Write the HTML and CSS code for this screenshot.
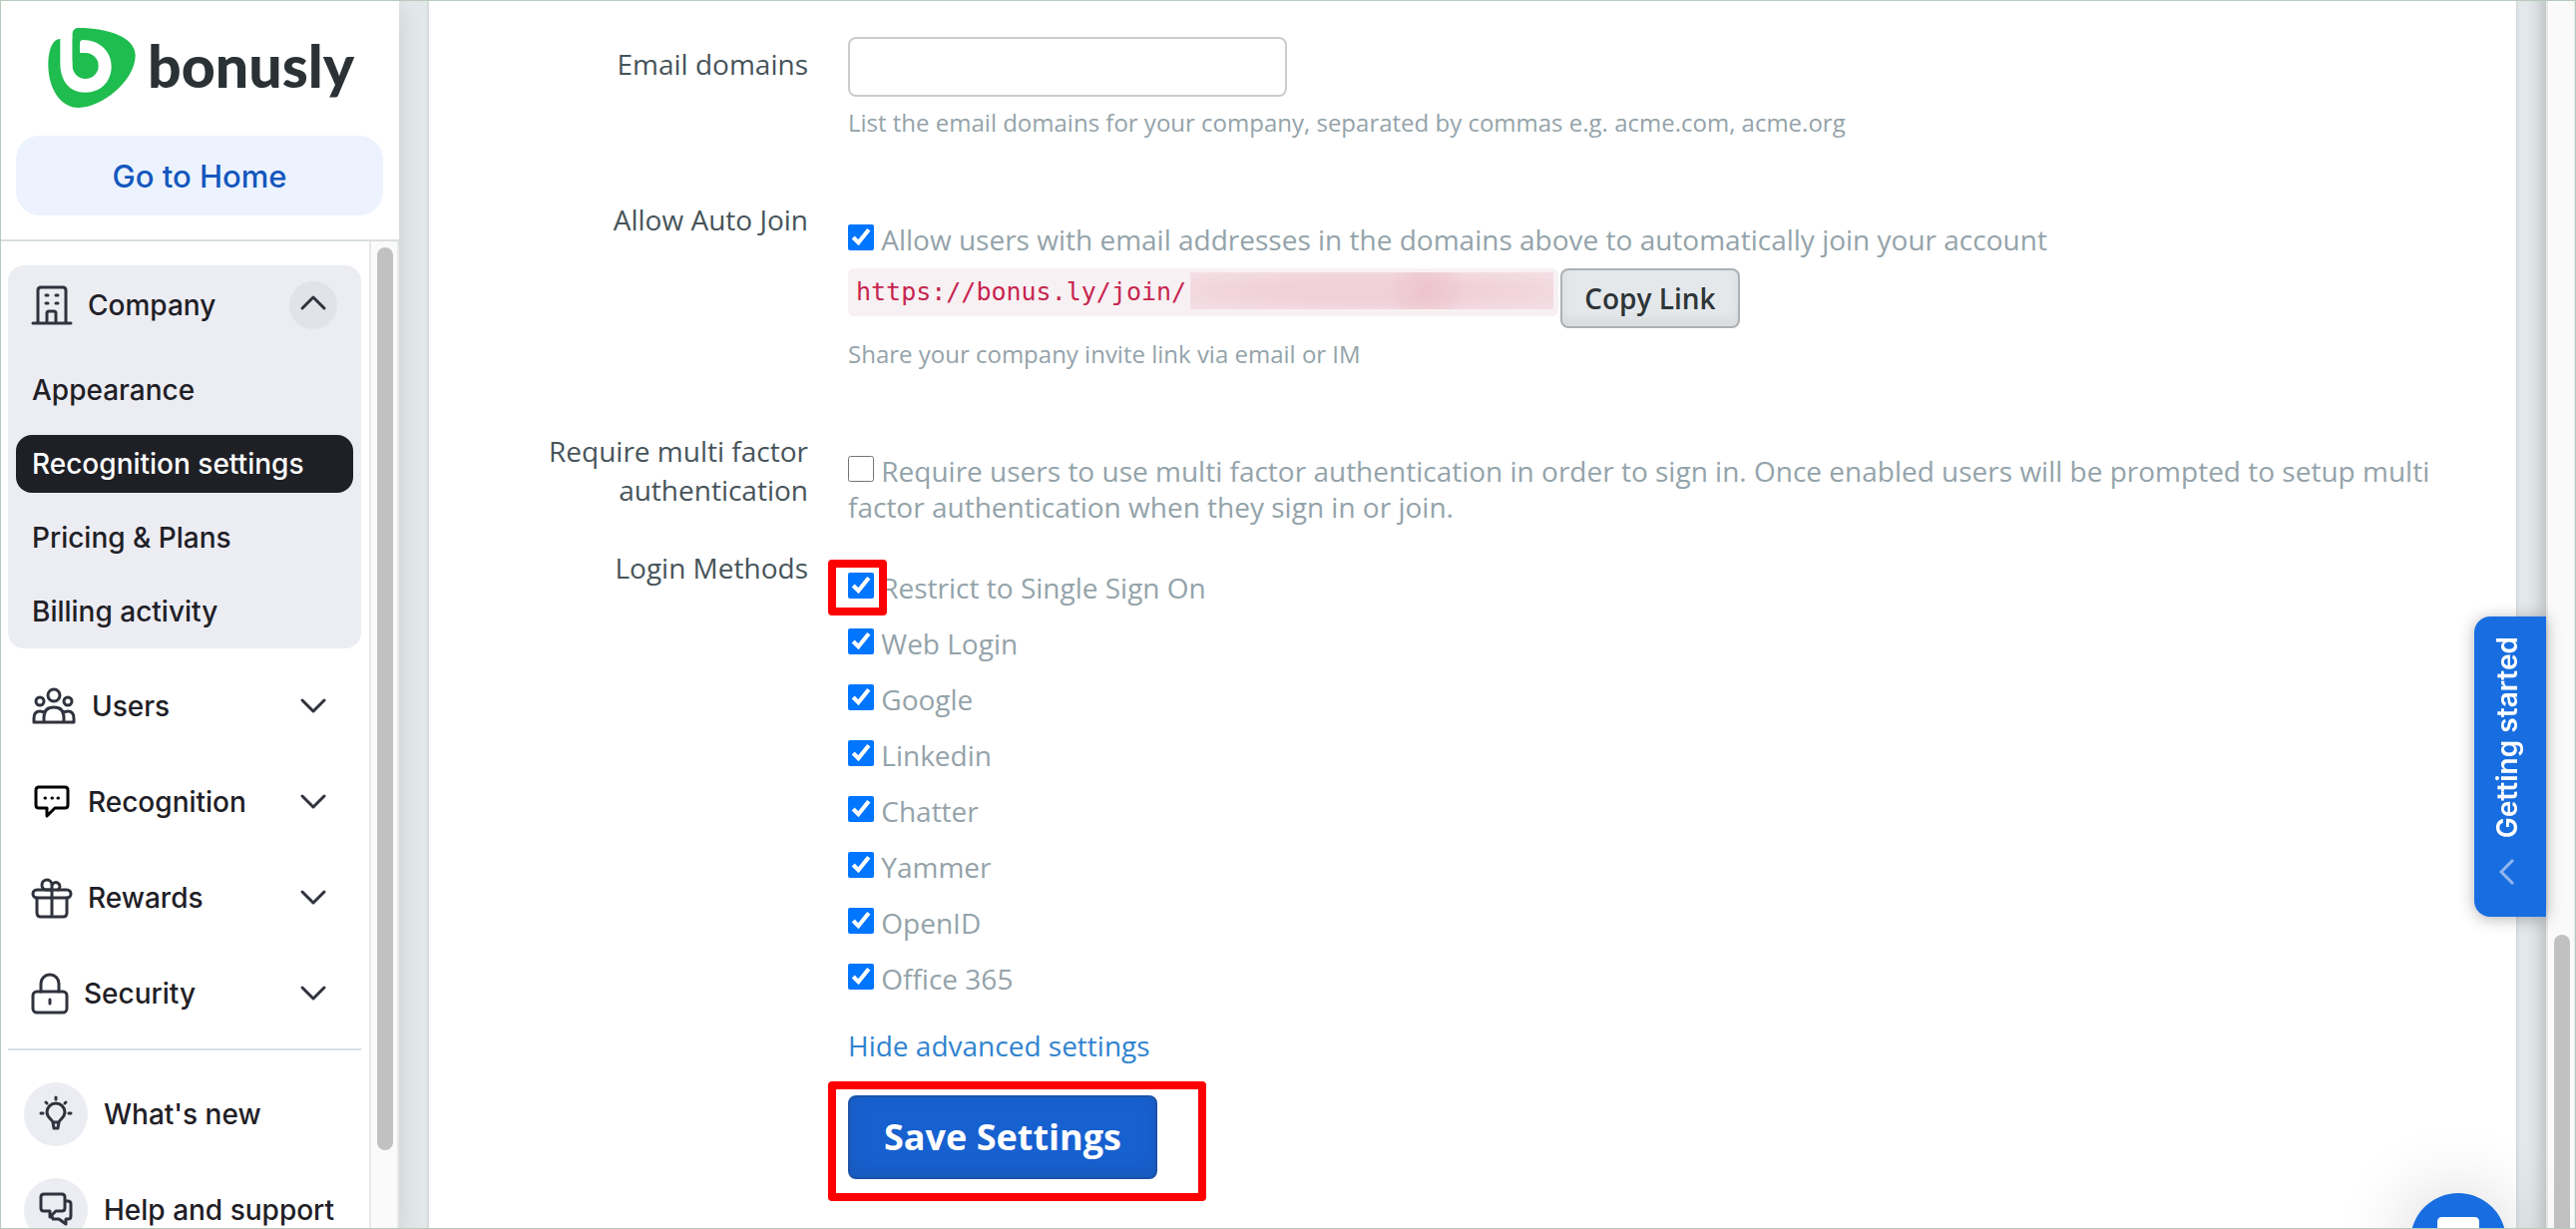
FILE: index.html
```html
<!DOCTYPE html>
<html lang="en">
  <head>
    <meta charset="UTF-8" />
    <title>Bonusly - Recognition settings</title>
    <link rel="stylesheet" href="styles.css">
  </head>
  <body>
    <aside class="sidebar">
      <div class="sidebar-head">
        <a class="logo" href="#">
          <svg width="88" height="80" viewBox="0 0 262 240">
            <path fill="#1fbc4f" d="M36 33C12 33 0 68 0 110C0 180 36 240 92 240C160 240 262 160 262 82C262 28 180 0 92 0C80 0 73 8 73 20L73 33Z" />
            <path fill="#fff" d="M36 0V104C36 160 64 194 112 194C158 194 190 160 190 116C190 70 154 36 104 36Q95 36 95 45V75H112A39 39 0 1 1 73 114V0Z" />
            <path fill="#1fbc4f" d="M73 40V20Q73 0 93 0H100V36Q95 38 95 45V75L73 100Z" />
          </svg>
          <span>bonusly</span>
        </a>
        <button class="home">Go to Home</button>
      </div>
      <div class="sidebar-body">
        <nav class="menu">
          <div class="group">
            <button class="section">
              <svg width="40" height="40" viewBox="0 0 40 40">
                <path d="M6 38V5Q6 2 9 2H31Q34 2 34 5V38M1 38H39M15 38V28Q15 26 17 26H22Q24 26 24 28V38M14 10H16M24 10H26M14 18H16M24 18H26" />
              </svg>
              <span>Company</span>
              <span class="arrow up"><svg width="24" height="14" viewBox="0 0 24 14"><path d="M1 13L12 2L23 13" /></svg></span>
            </button>
            <a class="item" href="#">Appearance</a>
            <a class="item active" href="#">Recognition settings</a>
            <a class="item" href="#">Pricing &amp; Plans</a>
            <a class="item" href="#">Billing activity</a>
          </div>
          <button class="section">
            <svg width="44" height="40" viewBox="0 0 44 40">
              <circle cx="22" cy="9" r="6" /><circle cx="8" cy="15" r="4" /><circle cx="36" cy="15" r="4" />
              <path d="M2 36V32Q2 25 8 25Q11 25 13 27M42 36V32Q42 25 36 25Q33 25 31 27M12 36V31Q12 21 22 21Q32 21 32 31V36M2 36H42" />
            </svg>
            <span>Users</span>
            <span class="arrow"><svg width="24" height="14" viewBox="0 0 24 14"><path d="M1 1L12 12L23 1" /></svg></span>
          </button>
          <button class="section">
            <svg class="solid" width="40" height="40" viewBox="0 0 40 40">
              <path d="M7 5H33Q36 5 36 8V23Q36 26 33 26H23L15 34V26H7Q4 26 4 23V8Q4 5 7 5ZM13 16H13.500M20 16H20.500M26 16H26.500" />
            </svg>
            <span>Recognition</span>
            <span class="arrow"><svg width="24" height="14" viewBox="0 0 24 14"><path d="M1 1L12 12L23 1" /></svg></span>
          </button>
          <button class="section">
            <svg width="40" height="40" viewBox="0 0 40 40">
              <rect x="1" y="12" width="38" height="8" rx="4" />
              <path d="M5 20V35Q5 39 9 39H31Q35 39 35 35V20M20 12V39M20 12H14A5 5 0 1 1 20 7ZM20 12V8A4 4 0 1 1 26 12" />
            </svg>
            <span>Rewards</span>
            <span class="arrow"><svg width="24" height="14" viewBox="0 0 24 14"><path d="M1 1L12 12L23 1" /></svg></span>
          </button>
          <button class="section">
            <svg width="36" height="40" viewBox="0 0 36 40">
              <rect x="1" y="18" width="34" height="21" rx="4" />
              <path d="M9 18V10A9 9 0 0 1 27 10V18M18 26V30" />
            </svg>
            <span>Security</span>
            <span class="arrow"><svg width="24" height="14" viewBox="0 0 24 14"><path d="M1 1L12 12L23 1" /></svg></span>
          </button>
          <div class="extras">
            <a class="extra" href="#">
              <span class="bubble">
                <svg width="34" height="36" viewBox="0 0 34 36">
                  <path d="M14 26C13 23 8 21 8 16A9 9 0 0 1 26 16C26 21 21 23 20 26ZM14 26L15 32H19L20 26M17 1V3M7 6L8 7M27 6L26 7M2 17H4M30 17H32" />
                </svg>
              </span>
              What's new
            </a>
            <a class="extra" href="#">
              <span class="bubble">
                <svg width="34" height="36" viewBox="0 0 34 36">
                  <path d="M5 2H23Q26 2 26 5V16Q26 19 23 19H17L11 25V19H5Q2 19 2 16V5Q2 2 5 2ZM27 9H29Q32 9 32 12V24Q32 27 29 27H27V32L20 27H14L13 24" />
                </svg>
              </span>
              Help and support
            </a>
          </div>
        </nav>
        <div class="track"><div class="thumb"></div></div>
      </div>
    </aside>

    <main class="page">
      <form class="panel" onsubmit="return false">
        <div class="row">
          <label class="name" for="domains">Email domains</label>
          <div>
            <input class="text" type="text" id="domains" />
            <p class="help">List the email domains for your company, separated by commas e.g. acme.com, acme.org</p>
          </div>
        </div>
        <div class="row">
          <span class="name">Allow Auto Join</span>
          <div class="checks">
            <label class="check"><input type="checkbox" checked /> Allow users with email addresses in the domains above to automatically join your account</label>
            <div class="invite">
              <code>https://bonus.ly/join/<span class="hidden-key"></span></code>
              <button type="button" class="copy">Copy Link</button>
            </div>
            <p class="help">Share your company invite link via email or IM</p>
          </div>
        </div>
        <div class="row">
          <span class="name">Require multi factor authentication</span>
          <div class="checks">
            <label class="check"><input type="checkbox" /> Require users to use multi factor authentication in order to sign in. Once enabled users will be prompted to setup multi factor authentication when they sign in or join.</label>
          </div>
        </div>
        <div class="row">
          <span class="name">Login Methods</span>
          <div class="checks">
            <label class="check marked"><input type="checkbox" checked /> Restrict to Single Sign On</label>
            <label class="check"><input type="checkbox" checked /> Web Login</label>
            <label class="check"><input type="checkbox" checked /> Google</label>
            <label class="check"><input type="checkbox" checked /> Linkedin</label>
            <label class="check"><input type="checkbox" checked /> Chatter</label>
            <label class="check"><input type="checkbox" checked /> Yammer</label>
            <label class="check"><input type="checkbox" checked /> OpenID</label>
            <label class="check"><input type="checkbox" checked /> Office 365</label>
            <a class="advanced" href="#">Hide advanced settings</a>
            <div class="save-box"><button class="save">Save Settings</button></div>
          </div>
        </div>
      </form>
      <button class="started">
        <span>Getting started</span>
        <svg width="16" height="28" viewBox="0 0 16 28"><path d="M14 2L2 14L14 26" /></svg>
      </button>
      <button class="chat" aria-label="Chat">
        <svg width="42" height="48" viewBox="0 0 42 48"><path d="M5 0H37Q42 0 42 5V48L34 42H5Q0 42 0 37V5Q0 0 5 0Z" /></svg>
      </button>
    </main>
    <div class="track page-track"><div class="thumb"></div></div>
  </body>
</html>
```
FILE: styles.css
```css
*,
*::before,
*::after {
  box-sizing: border-box;
}

body {
  margin: 0;
  display: flex;
  height: 100vh;
  overflow: hidden;
  font: 28px/36px "Open Sans", sans-serif;
  background: #e3e8eb;
}

body::after {
  content: "";
  position: fixed;
  inset: 0;
  z-index: 2;
  border: 1px solid #b7cabb;
  pointer-events: none;
}

button {
  font: inherit;
  border: none;
  cursor: pointer;
}

a {
  text-decoration: none;
}

/* sidebar */

.sidebar {
  flex: none;
  width: 400px;
  display: flex;
  flex-direction: column;
  background: #fff;
  font-family: Inter, sans-serif;
  font-weight: 500;
  z-index: 1;
  box-shadow: 0 8px 24px rgba(0, 0, 0, 0.12);
}

.sidebar-head {
  flex: none;
  padding: 28px 16px 24px;
  border-bottom: 2px solid #d9dfe3;
}

.logo {
  display: flex;
  align-items: center;
  gap: 12px;
  height: 80px;
  margin: 0 16px 28px 32px;
  color: #2a3236;
  font: 900 59px/72px Lato, sans-serif;
}

.logo svg {
  flex: none;
}

.logo span {
  padding-bottom: 4px;
}

.home {
  width: 100%;
  height: 80px;
  padding-top: 3px;
  border-radius: 24px;
  background: #ecf3fe;
  color: #1457bd;
  font-size: 31px;
}

.sidebar-body {
  flex: 1;
  display: flex;
  min-height: 0;
}

.menu {
  flex: 1;
  padding: 24px 8px 0;
  overflow: hidden;
}

.menu svg {
  flex: none;
  fill: none;
  stroke: #30333d;
  stroke-width: 3;
  stroke-linecap: round;
  stroke-linejoin: round;
  overflow: visible;
}

.menu svg.solid {
  stroke: #000;
}

.group {
  padding-bottom: 8px;
  margin-bottom: 18px;
  background: #ecedf3;
  border-radius: 16px;
}

.section {
  display: flex;
  align-items: center;
  gap: 16px;
  width: 100%;
  height: 80px;
  margin-top: 16px;
  padding: 0 24px;
  background: none;
  color: #1f2026;
  font-size: 28px;
}

.group + .section {
  margin-top: 0;
}

.group .section {
  margin: 0 0 16px;
}

.arrow {
  display: flex;
  align-items: center;
  justify-content: center;
  width: 48px;
  height: 48px;
  margin-left: auto;
  border-radius: 50%;
}

.arrow.up {
  background: #e2e3e8;
  padding-bottom: 6px;
}

.item {
  display: flex;
  align-items: center;
  height: 58px;
  margin: 0 8px 16px;
  padding: 0 0 0 16px;
  border-radius: 16px;
  color: #1f2026;
  font-size: 28px;
}

.item:last-child {
  margin-bottom: 0;
}

.item.active {
  background: #1f2026;
  color: #fff;
}

.extras {
  display: flex;
  flex-direction: column;
  gap: 32px;
  margin-top: 15px;
  padding: 32px 16px;
  border-top: 2px solid #d9dfe3;
}

.extra {
  display: flex;
  align-items: center;
  gap: 16px;
  color: #1f2026;
  font-size: 28px;
}

.bubble {
  display: flex;
  align-items: center;
  justify-content: center;
  width: 64px;
  height: 64px;
  border-radius: 50%;
  background: #ecedf3;
}

.track {
  flex: none;
  width: 30px;
  padding: 6px 4px 6px 6px;
  border: solid #e8e8e8;
  border-width: 0 2px;
  background: #fafafa;
}

.thumb {
  width: 16px;
  height: 905px;
  border-radius: 8px;
  background: #c1c1c1;
}

.page-track {
  padding-top: 937px;
}

/* settings form */

.page {
  flex: 1;
  min-width: 0;
  padding: 0 30px;
  box-shadow: inset -16px 0 16px -12px rgba(0, 0, 0, 0.2);
}

.panel {
  height: 100%;
  padding: 37px 70px 0 40px;
  background: #fff;
  box-shadow: 0 0 4px rgba(0, 0, 0, 0.15);
}

.row {
  display: grid;
  grid-template-columns: 340px 1fr;
  gap: 40px;
  margin-bottom: 16px;
}

.row:last-child {
  margin-bottom: 0;
}

.name {
  padding: 8px 0 0 50px;
  line-height: 39px;
  text-align: right;
  color: #47545a;
}

.text {
  display: block;
  width: 440px;
  height: 60px;
  padding: 0 12px;
  border: 2px solid #ccc;
  border-radius: 8px;
  font: inherit;
}

.help {
  margin: 8px 0 36px;
  font-size: 24px;
  color: #94a3aa;
}

.checks {
  padding-top: 29px;
}

.check {
  display: block;
  position: relative;
  color: #94a3aa;
}

.check + .check {
  margin-top: 20px;
}

.check input {
  width: 26px;
  height: 26px;
  margin: 0;
  accent-color: #0075ff;
}

.marked::before {
  content: "";
  position: absolute;
  left: -20px;
  top: -10px;
  width: 59px;
  height: 56px;
  border: 8px solid #f00;
  border-radius: 4px;
}

.invite {
  display: flex;
  align-items: flex-start;
  gap: 2px;
  margin-top: 11px;
}

code {
  display: flex;
  align-items: center;
  height: 48px;
  padding: 0 5px 0 8px;
  border-radius: 6px;
  background: #f8f1f4;
  color: #c7254e;
  font: 25px/36px "DejaVu Sans Mono", monospace;
}

.hidden-key {
  width: 364px;
  height: 37px;
  margin: 0 0 4px 4px;
  background: radial-gradient(circle at 65% 50%, #edc4ce, transparent 40px), radial-gradient(ellipse, #f1d1d9 40%, #f4dfe5);
}

.copy {
  height: 60px;
  padding: 0 22px;
  border: 2px solid #adb1b4;
  border-radius: 8px;
  background: #e4e8ea;
  box-shadow: inset 0 -6px 12px rgba(0, 0, 0, 0.06);
  color: #2e3538;
  font-weight: 600;
}

.advanced {
  display: block;
  width: fit-content;
  margin-top: 31px;
  color: #3183cf;
}

.save-box {
  width: 379px;
  height: 120px;
  margin: 18px 0 0 -20px;
  padding: 6px 12px;
  border: 8px solid #f00;
  border-radius: 4px;
}

.save {
  height: 84px;
  padding: 0 34px;
  border: 2px solid #1c52a8;
  border-radius: 8px;
  background: #1760cf;
  box-shadow: inset 0 -6px 16px rgba(30, 70, 130, 0.25);
  color: #fff;
  font-size: 36px;
  font-weight: 700;
}

/* floating buttons */

.started {
  position: fixed;
  right: 30px;
  top: 618px;
  display: flex;
  flex-direction: column;
  align-items: center;
  gap: 20px;
  width: 72px;
  height: 301px;
  padding: 20px 6px 0 0;
  border-radius: 16px 0 0 16px;
  background: #186ee0;
  box-shadow: 0 2px 16px rgba(0, 0, 0, 0.3);
  color: #fff;
  font: 600 28px/36px Inter, sans-serif;
}

.started span {
  writing-mode: vertical-rl;
  transform: rotate(180deg);
}

.started svg {
  fill: none;
  stroke: #93b6ef;
  stroke-width: 3;
}

.chat {
  position: fixed;
  right: 70px;
  bottom: -60px;
  width: 96px;
  height: 96px;
  padding: 24px 27px;
  border-radius: 50%;
  background: #186ee0;
  box-shadow: 0 4px 80px rgba(0, 0, 0, 0.2);
}

.chat svg {
  display: block;
  fill: #fff;
}
```
